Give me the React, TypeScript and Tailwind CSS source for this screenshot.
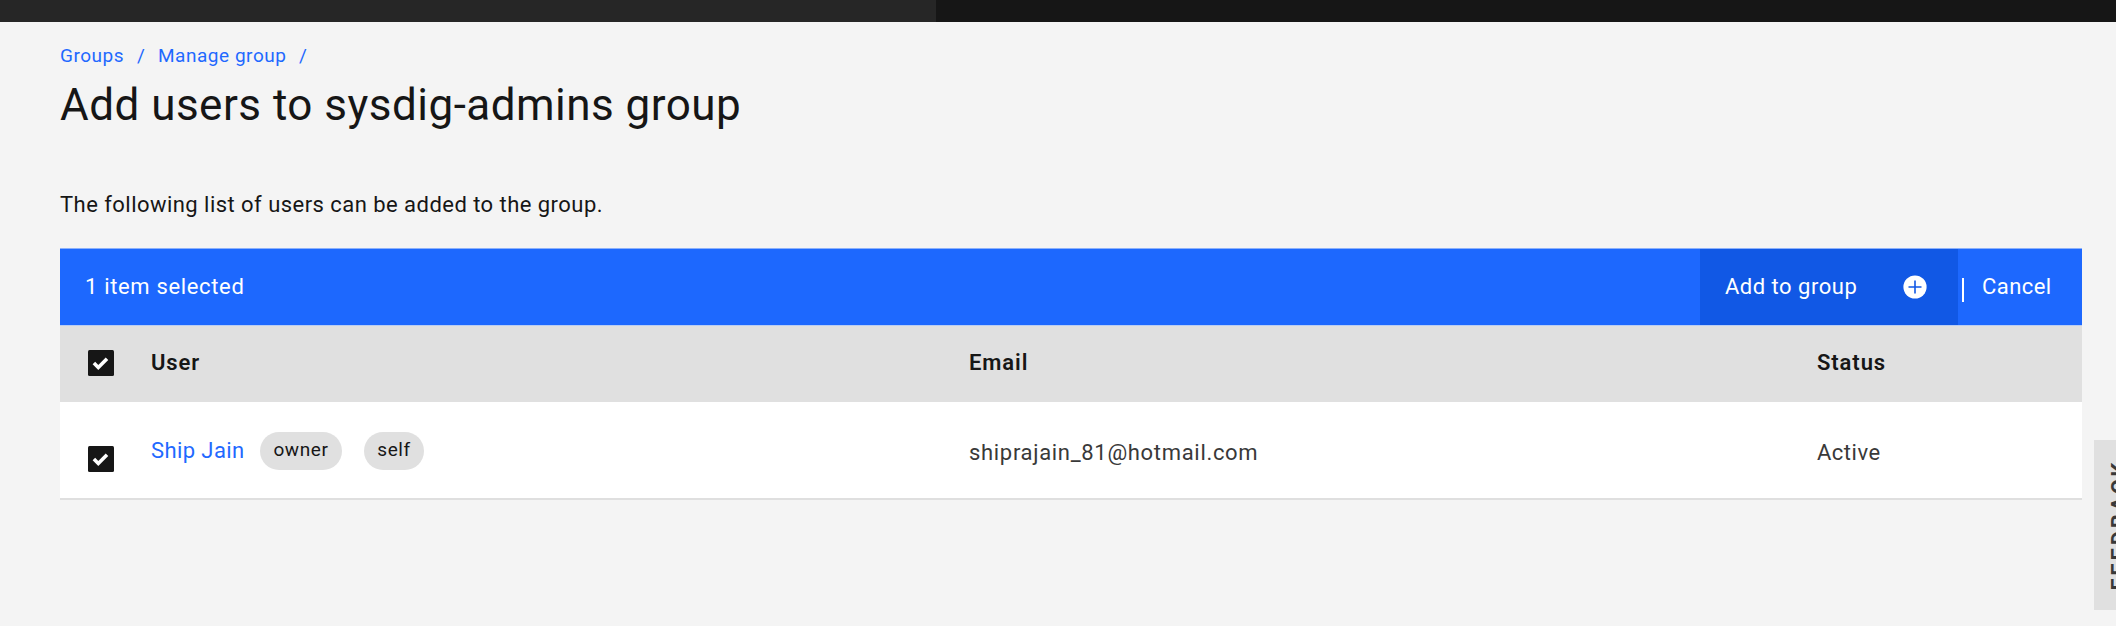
import React from "react";

function CheckedBox() {
  return (
    <svg className="block h-[26px] w-[26px] shrink-0" viewBox="0 0 26 26">
      <rect width="26" height="26" rx="1.5" fill="#161616" />
      <path d="M5.9 13 L10.3 17.4 L19 8.7" fill="none" stroke="#fff" strokeWidth="3.6" />
    </svg>
  );
}

function AddFilled() {
  return (
    <svg className="block h-6 w-6 shrink-0" viewBox="0 0 24 24">
      <circle cx="12" cy="12" r="11.6" fill="#fff" />
      <path d="M12 5.5v13M5.5 12h13" stroke="#1158e5" strokeWidth="1.6" />
    </svg>
  );
}

export default function App() {
  return (
    <div className="relative flex h-[626px] w-full flex-col overflow-hidden bg-[#f4f4f4] font-['Roboto',sans-serif] text-[22px] leading-[30px] whitespace-nowrap text-[#161616]">
      <header className="flex h-[22px] shrink-0 bg-[#161616]">
        <div className="w-[936px] bg-[#262626]" />
      </header>

      <main className="ml-[60px] flex w-[2022px] flex-col">
        <nav className="mt-[22px] flex h-6 text-[19px] leading-6 tracking-[0.53px] text-[#1f69ff]">
          <a className="w-[77px]">Groups</a>
          <span className="w-[21px]">/</span>
          <a className="w-[141px]">Manage group</a>
          <span>/</span>
        </nav>
        <h1 className="mt-[9px] h-[56px] text-[44px] leading-[56px] font-normal tracking-[0.48px]">
          Add users to sysdig-admins group
        </h1>
        <p className="mt-[57px] h-[30px] tracking-[0.46px]">
          The following list of users can be added to the group.
        </p>

        <section className="mt-[28px]">
          <div className="flex h-[78px] items-center justify-between border-y border-t-[#8bb0fb] border-b-[#b9cdf3] bg-[#1d68fe] text-white">
            <span className="pl-[25px] tracking-[0.66px]">1 item selected</span>
            <div className="flex h-full items-center">
              <button className="flex h-full w-[258px] items-center justify-between bg-[#1158e5] pr-[31px] pl-[25px]">
                <span className="tracking-[0.5px]">Add to group</span>
                <AddFilled />
              </button>
              <div className="mt-[6px] ml-1 h-6 w-0.5 bg-white" />
              <button className="w-[118px] pl-[18px] text-left tracking-[0.45px]">Cancel</button>
            </div>
          </div>

          <div className="flex h-[76px] items-center bg-[#e0e0e0] font-semibold tracking-[0.9px]">
            <div className="w-[91px] pb-0.5 pl-7">
              <CheckedBox />
            </div>
            <span className="w-[818px] pb-0.5">User</span>
            <span className="w-[848px] pb-0.5">Email</span>
            <span className="pb-0.5">Status</span>
          </div>

          <div className="flex h-[98px] border-b-2 border-[#dfdfdf] bg-white text-[#393939]">
            <div className="w-[91px] pt-11 pl-7">
              <CheckedBox />
            </div>
            <div className="mt-[30px] flex h-[38px] w-[818px]">
              <a className="w-[109px] pt-1 tracking-[0.4px] text-[#1f69ff]">Ship Jain</a>
              <span className="mr-[22px] w-[82px] rounded-full bg-[#e0e0e0] text-center text-[19px] leading-[35px] tracking-[0.6px] text-[#161616]">
                owner
              </span>
              <span className="w-[60px] rounded-full bg-[#e0e0e0] text-center text-[19px] leading-[35px] tracking-[0.6px] text-[#161616]">
                self
              </span>
            </div>
            <span className="w-[848px] pt-[36px] tracking-[0.68px]">shiprajain_81@hotmail.com</span>
            <span className="pt-[36px] tracking-[0.5px]">Active</span>
          </div>
        </section>
      </main>

      <aside className="absolute top-[440px] left-[2094px] flex h-[170px] w-[52px] items-center justify-center bg-[#e0e0e0]">
        <span className="rotate-180 text-[22px] leading-6 font-bold tracking-[2.8px] text-[#393939] [writing-mode:vertical-rl]">
          FEEDBACK
        </span>
      </aside>
    </div>
  );
}
